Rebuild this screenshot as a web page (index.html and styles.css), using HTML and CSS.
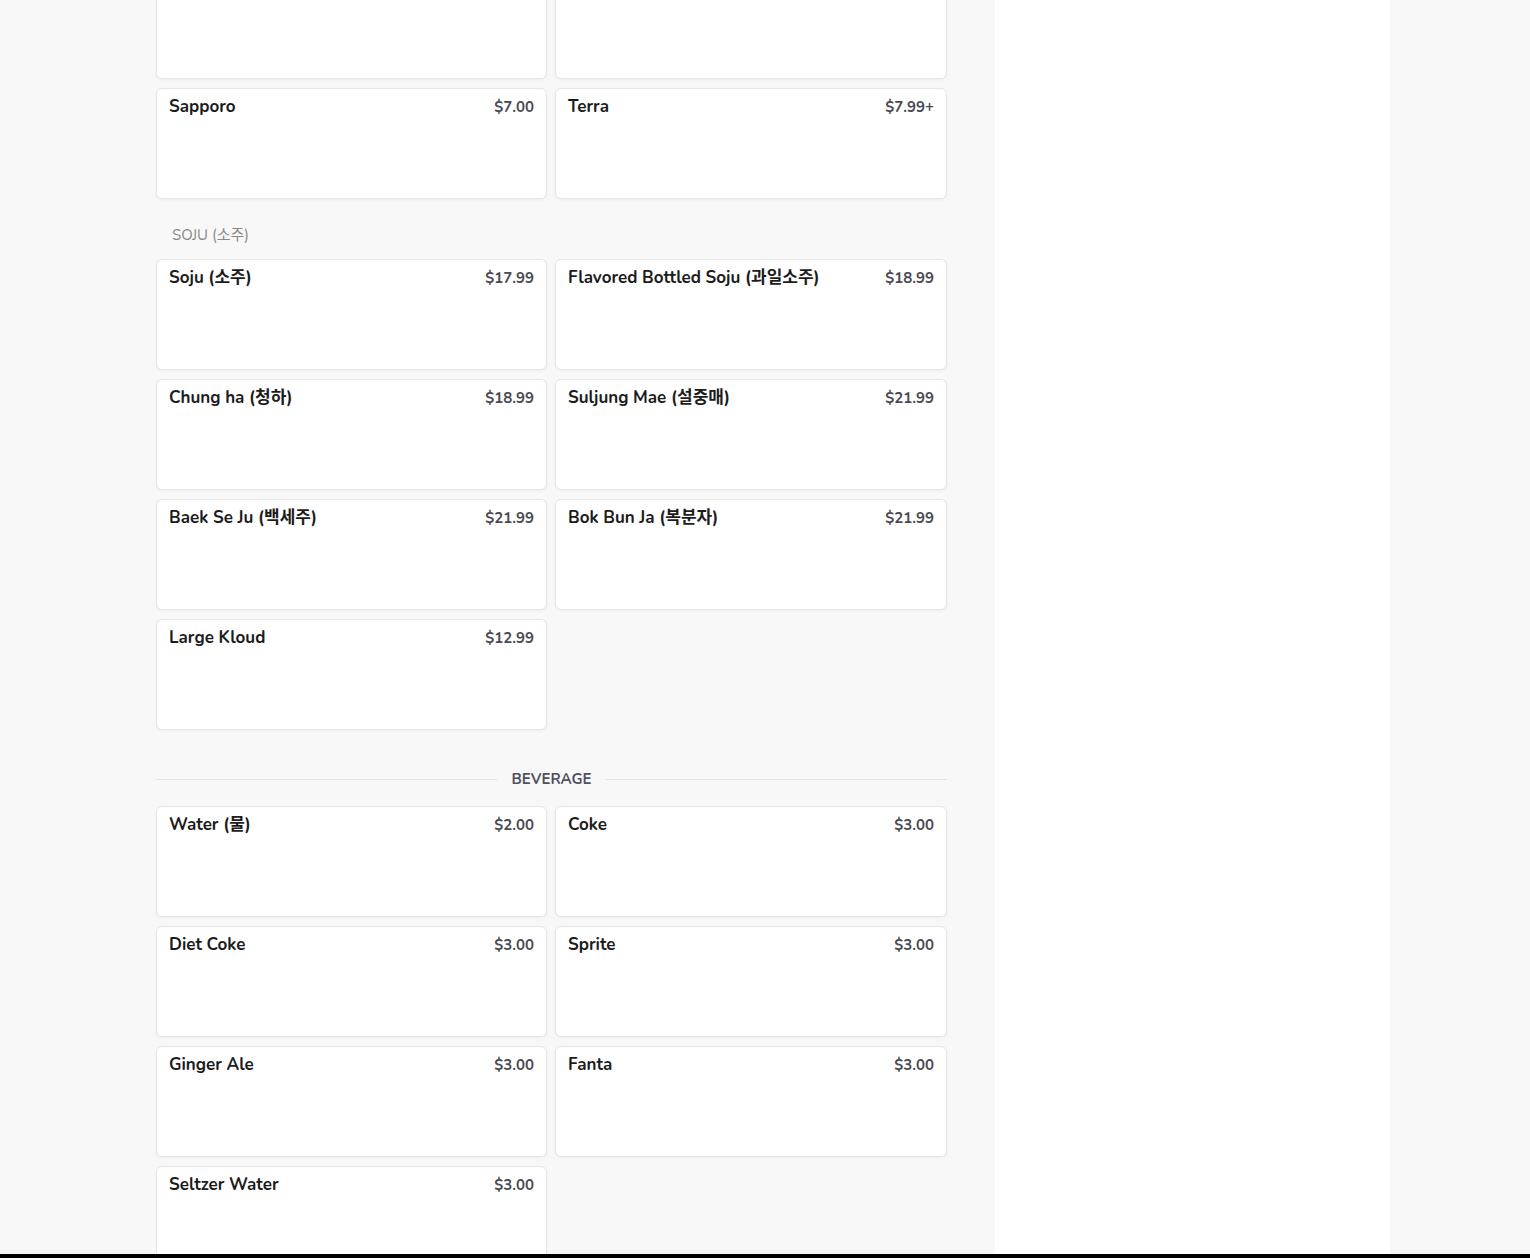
FILE: index.html
```html
<!DOCTYPE html>
<html lang="en">
<head>
<meta charset="utf-8">
<title>Menu</title>
<link rel="stylesheet" href="styles.css">
</head>
<body>
<div class="page">
  <main class="menu">
    <div class="grid">
      <div class="card"><div class="card-head"><span class="name"></span><span class="price"></span></div></div>
      <div class="card"><div class="card-head"><span class="name"></span><span class="price"></span></div></div>
      <div class="card"><div class="card-head"><span class="name">Sapporo</span><span class="price">$7.00</span></div></div>
      <div class="card"><div class="card-head"><span class="name">Terra</span><span class="price">$7.99+</span></div></div>
    </div>

    <div class="sub-label">SOJU (소주)</div>
    <div class="grid">
      <div class="card"><div class="card-head"><span class="name">Soju (소주)</span><span class="price">$17.99</span></div></div>
      <div class="card"><div class="card-head"><span class="name">Flavored Bottled Soju (과일소주)</span><span class="price">$18.99</span></div></div>
      <div class="card"><div class="card-head"><span class="name">Chung ha (청하)</span><span class="price">$18.99</span></div></div>
      <div class="card"><div class="card-head"><span class="name">Suljung Mae (설중매)</span><span class="price">$21.99</span></div></div>
      <div class="card"><div class="card-head"><span class="name">Baek Se Ju (백세주)</span><span class="price">$21.99</span></div></div>
      <div class="card"><div class="card-head"><span class="name">Bok Bun Ja (복분자)</span><span class="price">$21.99</span></div></div>
      <div class="card"><div class="card-head"><span class="name">Large Kloud</span><span class="price">$12.99</span></div></div>
    </div>

    <div class="section-title"><span>BEVERAGE</span></div>
    <div class="grid">
      <div class="card"><div class="card-head"><span class="name">Water (물)</span><span class="price">$2.00</span></div></div>
      <div class="card"><div class="card-head"><span class="name">Coke</span><span class="price">$3.00</span></div></div>
      <div class="card"><div class="card-head"><span class="name">Diet Coke</span><span class="price">$3.00</span></div></div>
      <div class="card"><div class="card-head"><span class="name">Sprite</span><span class="price">$3.00</span></div></div>
      <div class="card"><div class="card-head"><span class="name">Ginger Ale</span><span class="price">$3.00</span></div></div>
      <div class="card"><div class="card-head"><span class="name">Fanta</span><span class="price">$3.00</span></div></div>
      <div class="card"><div class="card-head"><span class="name">Seltzer Water</span><span class="price">$3.00</span></div></div>
    </div>
  </main>
  <aside class="side"></aside>
</div>
<div class="bottom-bar"></div>
</body>
</html>
```

FILE: styles.css
```css
* { box-sizing: border-box; }

html, body {
  margin: 0;
  padding: 0;
  height: 100%;
}

body {
  background: #f8f8f8;
  font-family: "Nunito", "Lato", "Noto Sans CJK KR", sans-serif;
  color: #1c1c1c;
  overflow: hidden;
}

.page {
  display: flex;
  align-items: stretch;
  gap: 48px;
  padding-left: 156px;
  height: 100vh;
}

.menu {
  width: 791px;
  flex: none;
  margin-top: -32px;
}

.side {
  width: 395px;
  flex: none;
  background: #ffffff;
}

.grid {
  display: grid;
  grid-template-columns: 391px 392px;
  column-gap: 8px;
  row-gap: 9px;
}

.card {
  height: 111px;
  background: #ffffff;
  border: 1px solid #e6e6e6;
  border-radius: 6px;
  box-shadow: 0 1px 3px rgba(0, 0, 0, 0.05);
  padding: 7px 12px 0 12px;
}

.card-head {
  display: flex;
  justify-content: space-between;
  align-items: baseline;
  gap: 12px;
  line-height: 22px;
}

.name {
  font-size: 17px;
  font-weight: 700;
  color: #1c1c1c;
}

.price {
  font-size: 15px;
  font-weight: 700;
  color: #4a4a52;
  white-space: nowrap;
}

.sub-label {
  font-size: 15px;
  line-height: 20px;
  color: #8a8a8a;
  padding-left: 16px;
  margin: 26px 0 14px;
}

.section-title {
  display: flex;
  align-items: center;
  gap: 15px;
  margin: 39px 0 17px;
  line-height: 20px;
  font-size: 15px;
  font-weight: 700;
  color: #50505e;
}

.section-title::before,
.section-title::after {
  content: "";
  flex: 1;
  height: 1px;
  background: #e2e2e2;
}

.bottom-bar {
  position: fixed;
  left: 0;
  right: 0;
  bottom: 0;
  height: 4px;
  background: #000000;
}
```
